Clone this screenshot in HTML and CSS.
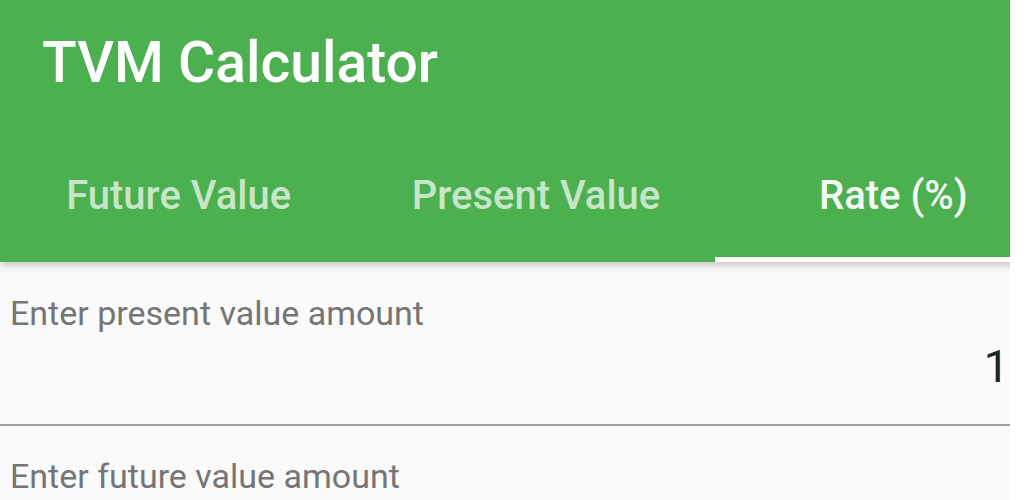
FILE: index.html
```html
<!DOCTYPE html>
<html>
<head>
<meta charset="utf-8">
<link rel="stylesheet" href="styles.css">
</head>
<body>
<div class="frame">
  <header class="appbar">
    <div class="toolbar">TVM Calculator</div>
    <nav class="tabs">
      <div class="tab">Future Value</div>
      <div class="tab">Present Value</div>
      <div class="tab active">Rate (%)</div>
    </nav>
  </header>
  <main class="content">
    <div class="field">
      <div class="label">Enter present value amount</div>
      <div class="value">1</div>
      <div class="underline"></div>
    </div>
    <div class="field">
      <div class="label">Enter future value amount</div>
    </div>
  </main>
</div>
</body>
</html>
```

FILE: styles.css
```css
html, body {
  margin: 0;
  padding: 0;
  background: #ffffff;
  height: 100%;
  overflow: hidden;
}

body {
  font-family: Roboto, "Liberation Sans", sans-serif;
}

.frame {
  width: 1010px;
  height: 500px;
  overflow: hidden;
  background: #fafafa;
  position: relative;
}

.appbar {
  width: 1072px;
  background: #4caf50;
  box-shadow: 0 3px 8px rgba(0, 0, 0, 0.22);
  position: relative;
  z-index: 1;
}

.toolbar {
  height: 140px;
  box-sizing: border-box;
  padding: 34px 0 0 42px;
  font-size: 57px;
  line-height: 57px;
  font-weight: 500;
  color: #ffffff;
}

.tabs {
  display: flex;
  height: 122px;
}

.tab {
  flex: 1;
  box-sizing: border-box;
  padding-top: 36px;
  text-align: center;
  font-size: 40px;
  line-height: 40px;
  font-weight: 500;
  color: rgba(255, 255, 255, 0.7);
  border-bottom: 5px solid transparent;
}

.tab.active {
  color: #f4fbf4;
  border-bottom-color: #ffffff;
}

.content {
  background: #fafafa;
}

.field {
  padding-top: 34px;
}

.field + .field {
  padding-top: 33px;
}

.label {
  padding-left: 10px;
  font-size: 34px;
  line-height: 34px;
  color: #757575;
}

.value {
  margin-top: 14px;
  padding-right: 1px;
  text-align: right;
  font-size: 45px;
  line-height: 45px;
  color: #212121;
}

.underline {
  margin-top: 35px;
  height: 2px;
  background: #9e9e9e;
}
```
